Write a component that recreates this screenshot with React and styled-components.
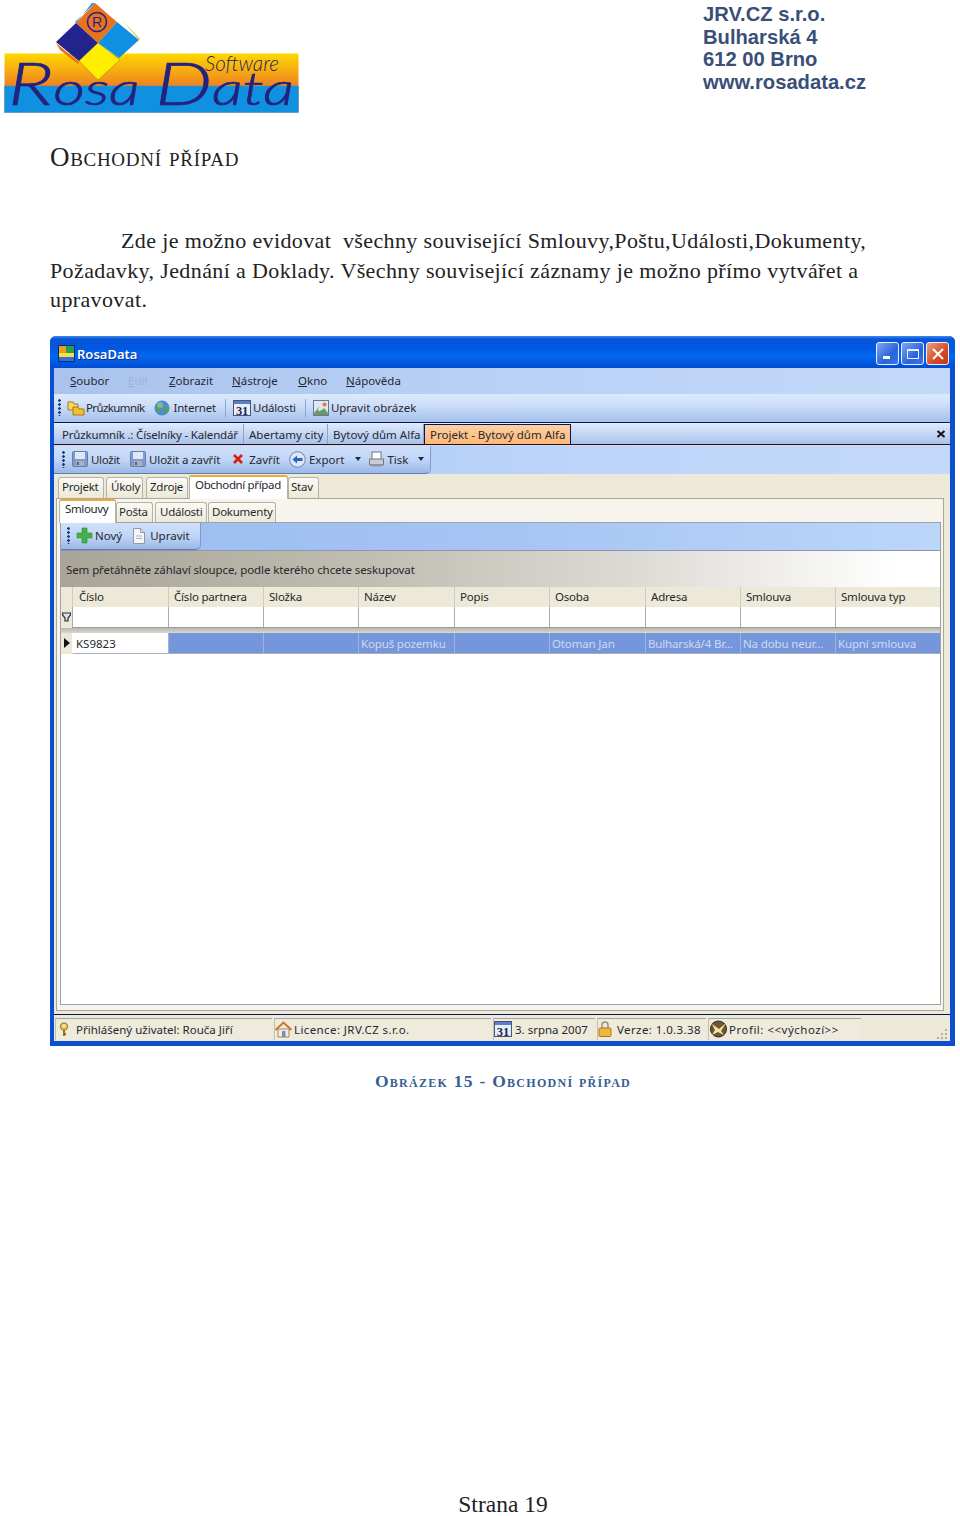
import React from 'react';
import styled, { createGlobalStyle } from 'styled-components';

const Global = createGlobalStyle`
  html, body { margin: 0; padding: 0; background: #fff; }
  #root { width: 960px; height: 1516px; overflow: hidden; }
`;

const Page = styled.div`
  width: 960px; height: 1516px; display: flex; flex-direction: column;
  font-family: "Liberation Serif", serif; color: #1c1c1c; background: #fff;
`;
const Header = styled.header`
  display: flex; justify-content: space-between; padding-top: 2px; padding-left: 3px; box-sizing: border-box; height: 115px;
`;
const Company = styled.div`
  width: 257px; font: bold 20.2px/22.7px "Liberation Sans", sans-serif; color: #3a4f78; margin-top: 1px;
`;
const Title = styled.h1`
  margin: 25px 0 0 50px; font: normal 27px/34px "Liberation Serif", serif; font-variant: small-caps; letter-spacing: .7px; color: #222;
`;
const Para = styled.p`
  margin: 52px 0 0 50px; font-size: 22px; line-height: 29.6px; letter-spacing: .38px; white-space: pre; color: #222;
`;
const Indent = styled.span` display: inline-block; width: 71px; `;
const Window = styled.div`
  margin: 21px 0 0 50px; width: 905px; height: 710px; box-sizing: border-box; display: flex; flex-direction: column; flex: none;
  padding: 0 5px 5px 4px; border-radius: 6px 6px 0 0; background: #0b4fd0;
  font-family: "Noto Sans", sans-serif; font-size: 11.5px; color: #26282e;
`;
const TitleBar = styled.div`
  height: 32px; flex: none; box-sizing: border-box; margin: 0 -5px 0 -4px; padding: 4px 6px 0 8px; display: flex; align-items: center; border-radius: 6px 6px 0 0;
  background: linear-gradient(#3b8cec 0, #0a55d8 3px, #0057e4 12px, #0068f0 20px, #004bd0 100%);
  color: #fff; font-size: 13px; font-weight: 600;
`;
const TitleText = styled.span` margin-left: 2px; text-shadow: 1px 1px 0 #0a2c8c; flex: 1; `;
const WinButtons = styled.div` display: flex; gap: 2px; `;
const WinBtn = styled.div`
  width: 23px; height: 23px; box-sizing: border-box; border: 1px solid #e8f0ff; border-radius: 3px;
  background: ${p => p.$close ? 'linear-gradient(135deg,#e9a088,#d84a20 60%,#c23a14)' : 'linear-gradient(135deg,#7ea8f0,#2a64dc 60%,#3a74e4)'};
  display: flex; align-items: center; justify-content: center;
`;
const Menu = styled.nav`
  height: 26px; display: flex; align-items: center; padding-left: 16px; flex: none;
  background: linear-gradient(90deg,#a9c3ee,#b9d1f6 50%,#c3d9f9);
`;
const MenuItem = styled.span`
  width: ${p => p.$w}px; color: ${p => p.$off ? '#9fb4d6' : '#26282e'};
  & u { text-underline-offset: 1px; }
`;
const Bar = styled.div`
  height: 28px; flex: none; display: flex; align-items: center; padding-left: 4px; box-sizing: border-box;
  background: linear-gradient(#dbe9fc, #cfe0f9 35%, #a5c0ec);
`;
const Dark = styled.div` height: 2px; flex: none; background: linear-gradient(#04195a 50%, #e8eef8 50%); `;
const Grip = styled.div`
  width: 3px; height: 17px; flex: none; background: radial-gradient(circle at 1.5px 1.5px, #1c3a80 1.2px, transparent 1.5px) 0 0 / 3px 4px;
`;
const Tool = styled.div`
  display: flex; align-items: center; gap: ${p => p.$gap ?? 2}px; margin-left: ${p => p.$ml ?? 0}px; white-space: nowrap; flex: none;
  letter-spacing: ${p => p.$ls ?? 0}px;
`;
const Sep = styled.div` width: 1px; height: 18px; background: #8ea8d4; margin-left: ${p => p.$ml}px; flex: none; `;
const DocTabs = styled.div`
  height: 21px; flex: none; display: flex; align-items: stretch; padding-left: 3px; box-sizing: border-box;
  background: linear-gradient(#dde9fb, #a9c2ec); border-bottom: 1px solid #06155a;
`;
const DocTab = styled.div`
  width: ${p => p.$w}px; flex: none; box-sizing: border-box; padding: 1px 0 0 5px; display: flex; align-items: center; white-space: nowrap;
  letter-spacing: ${p => p.$ls ?? 0}px;
  ${p => p.$active ? 'background: linear-gradient(#fdd0a0,#fdb878); border: 1px solid #06155a; border-bottom: 0; height: 20px;' : 'border-right: 1px solid #8ca4cc;'}
`;
const DocSpacer = styled.div` flex: 1; display: flex; align-items: center; justify-content: flex-end; padding-right: 4px; `;
const OrangeLine = styled.div` height: 1px; flex: none; background: #f9d2a6; `;
const ToolRow = styled.div`
  height: 28px; flex: none; display: flex; background: linear-gradient(90deg,#a9c4f2,#bdd5f9 60%,#c2d9f9);
`;
const Pill = styled.div`
  width: ${p => p.$w}px; flex: none; display: flex; align-items: center; padding-left: ${p => p.$pl ?? 4}px; box-sizing: border-box; border-radius: 0 0 5px 0;
  background: linear-gradient(#cfe0f9, #c0d5f6 50%, #9ab7e6); border-bottom: 1px solid #5f7eb4; border-right: 1px solid #7f9ccc;
`;
const Caret = styled.span`
  width: 0; height: 0; border: 3px solid transparent; border-top: 4px solid #1a2a50; border-bottom: 0; margin-left: ${p => p.$ml}px; flex: none;
`;
const Workspace = styled.div`
  flex: 1; min-height: 0; display: flex; flex-direction: column; background: #ece9d8;
`;
const TabStrip = styled.div`
  height: ${p => p.$h}px; flex: none; display: flex; align-items: flex-end; margin-left: ${p => p.$ml ?? 0}px; padding-left: ${p => p.$pl}px; box-sizing: border-box;
`;
const Tab = styled.div`
  width: ${p => p.$w}px; height: ${p => p.$h}px; margin-right: ${p => p.$mr ?? 0}px; box-sizing: border-box; flex: none; padding: 1px 0 0 ${p => p.$pl ?? 3}px; white-space: nowrap; line-height: 15px;
  letter-spacing: ${p => p.$active ? -0.35 : -0.25}px;
  border: 1px solid #b4b2a4; border-bottom: 0; border-radius: 3px 3px 0 0;
  background: ${p => p.$active ? '#fff' : 'linear-gradient(#fbfaf4,#ece9d8)'};
  ${p => p.$active && 'border-top: 2px solid #f0a838; padding-top: 0; position: relative; z-index: 1; margin-bottom: -1px;'}
`;
const OuterPanel = styled.div`
  flex: 1; min-height: 0; margin: 0 6px 3px 2px; border: 1px solid #a8a89c; padding: 0 2px 3px 3px; display: flex; flex-direction: column; background: #f6f4ec;
  box-sizing: border-box;
`;
const InnerPanel = styled.div`
  flex: 1; min-height: 0; border: 1px solid #9ca4a8; display: flex; flex-direction: column; background: #fff; margin: 0 0 2px 0;
`;
const Strip = styled.div`
  height: 27px; flex: none; display: flex; background: linear-gradient(90deg,#9cbcf0,#a6c4f4 50%,#bcd6fa);
  border-bottom: 1px solid #8c98a8;
`;
const GroupBox = styled.div`
  height: 36px; flex: none; display: flex; align-items: center; padding: 2px 0 0 5px; box-sizing: border-box; letter-spacing: -.1px;
  background: linear-gradient(90deg,#a8a498,#c0bdb2 35%,#dcdad4 65%,#fff 95%);
`;
const Row = styled.div`
  display: grid; grid-template-columns: 11px 96px 95px 95px 96px 95px 96px 95px 95px 105px; height: ${p => p.$h}px; flex: none; width: 879px;
  background: ${p => p.$bg};
`;
const Head = styled.div`
  padding-left: ${p => p.$pl ?? 5}px; display: flex; align-items: center; border-left: ${p => p.$first ? 0 : '1px solid #cfccbc'}; white-space: nowrap; letter-spacing: -.2px;
`;
const FCell = styled.div`
  border-left: 1px solid #a8aaa4; border-bottom: 1px solid #9a9c98; background: #fff;
`;
const RowHead = styled.div`
  display: flex; align-items: center; justify-content: center; background: #ece9d8;
`;
const Cell = styled.div`
  padding: 1px 0 0 ${p => p.$white ? 3 : 2}px; display: flex; align-items: center; white-space: nowrap; overflow: hidden; letter-spacing: ${p => p.$white ? 0 : -0.15}px;
  border-left: 1px solid ${p => p.$plain ? 'transparent' : '#a0b2dc'};
  border-bottom: 1px solid #a8aeb8;
  background: ${p => p.$white ? '#fff' : 'transparent'};
  color: ${p => p.$white ? '#26282e' : '#cdd9f4'};
`;
const RowGap = styled.div` height: 5px; flex: none; width: 879px; background: linear-gradient(#b8b8b0,#d8d8d0); `;
const Blank = styled.div` flex: 1; background: #fff; `;
const Status = styled.div`
  height: 27px; flex: none; display: flex; gap: 2px; padding: 3px 0 1px 1px; box-sizing: border-box; background: #ece9d8; border-top: 1px solid #06155a;
`;
const SPanel = styled.div`
  width: ${p => p.$w}px; flex: none; display: flex; align-items: center; box-sizing: border-box; white-space: nowrap; gap: ${p => p.$gap ?? 3}px; padding-left: ${p => p.$pl ?? 0}px;
  letter-spacing: ${p => p.$ls ?? 0}px;
  border-top: 1px solid #a8a494; border-left: 1px solid #c4c0b0; background: #eeebdd;
`;
const Grow = styled.div` flex: 1; display: flex; align-items: flex-end; justify-content: flex-end; padding-right: 2px; `;
const Caption = styled.div`
  margin-top: 24px; text-align: center; width: 1006px; font-weight: bold; font-size: 17.5px; line-height: 22px; font-variant: small-caps; letter-spacing: 1.27px; color: #365f91;
`;
const Footer = styled.div`
  margin-top: auto; width: 1006px; text-align: center; font-size: 23.5px; line-height: 24px; color: #222; height: 24px;
`;

const Logo = () => (
  <svg width="300" height="113" viewBox="0 0 300 113">
    <defs>
      <linearGradient id="lg" x1="0" y1="0" x2="0" y2="1"><stop offset="0" stopColor="#ffd800" /><stop offset="1" stopColor="#ee8122" /></linearGradient>
    </defs>
    <g transform="translate(-3 -2)">
      <rect x="4.500" y="53.500" width="294" height="33" fill="url(#lg)" />
      <rect x="4.500" y="86" width="294" height="26.500" fill="#1090e0" stroke="#5c8aa8" strokeWidth=".7" />
      <polygon points="95,3 117,22 98,43 76,23" fill="#e8731c" />
      <polygon points="76,23 92,3 95,3 75,22" fill="#1090e0" />
      <polygon points="117,22 139,40 119,58 98,43" fill="#1090e0" />
      <polygon points="122,20 140,39 139,40" fill="#d8c820" />
      <polygon points="76,23 98,43 79,61 56,42" fill="#23238e" />
      <polygon points="56,43 79,62 78,64 60,50" fill="#e8731c" />
      <polygon points="98,43 120,60 98,80 79,61" fill="#ffee00" stroke="#6a6a20" strokeWidth=".4" />
      <circle cx="97" cy="22" r="9.500" fill="none" stroke="#23238e" strokeWidth="1.600" />
      <text x="97" y="27" fontFamily="Liberation Sans" fontSize="14" textAnchor="middle" fill="#23238e">R</text>
      <text x="205" y="71" fontFamily="Lato" fontStyle="italic" fontWeight="300" fontSize="21" textLength="74" lengthAdjust="spacingAndGlyphs" fill="#23235e">Software</text>
      <text x="8" y="105" fontFamily="Lato" fontStyle="italic" fontWeight="300" fontSize="46" textLength="286" lengthAdjust="spacingAndGlyphs" fill="#23237e" stroke="#23237e" strokeWidth=".7">
        <tspan fontSize="60">R</tspan>osa <tspan fontSize="60">D</tspan>ata
      </text>
    </g>
  </svg>
);

const AppIcon = () => (
  <svg width="17" height="17" viewBox="0 0 17 17">
    <rect x="1" y="1" width="7" height="7" fill="#e8a020" /><rect x="8" y="1" width="8" height="7" fill="#28a050" />
    <rect x="1" y="8" width="15" height="4" fill="#f8e040" /><rect x="1" y="12" width="15" height="4" fill="#3070d8" />
    <rect x=".5" y=".5" width="16" height="16" fill="none" stroke="#0a2a70" />
  </svg>
);
const FolderIcon = () => (
  <svg width="18" height="16" viewBox="0 0 18 16">
    <path d="M1 2h5l1 2h4v6H1z" fill="#f8d860" stroke="#a87818" />
    <path d="M6 7h5l1 2h5v6H6z" fill="#f0c030" stroke="#a87818" />
  </svg>
);
const GlobeIcon = () => (
  <svg width="16" height="16" viewBox="0 0 16 16">
    <circle cx="8" cy="8" r="7.500" fill="#4a8ed0" />
    <path d="M3 4c3-2 5-1 6 1s-1 3-2 4-1 3-2 3-2-3-3-4 0-3 1-4zM11 8c1-1 3-1 4 0-.5 3-2 5-4 6-1-2 0-4 0-6z" fill="#5aa050" />
    <circle cx="6" cy="5" r="3" fill="#cfe6f8" opacity=".35" />
  </svg>
);
const CalIcon = () => (
  <svg width="18" height="16" viewBox="0 0 18 16">
    <rect x=".5" y=".5" width="17" height="15" fill="#e8eef8" stroke="#47557a" />
    <rect x="1" y="1" width="16" height="3" fill="#5a7fc8" />
    <text x="9" y="14.500" textAnchor="middle" fontFamily="Liberation Serif" fontWeight="bold" fontSize="12.500" fill="#1c2850">31</text>
  </svg>
);
const ImageIcon = () => (
  <svg width="16" height="16" viewBox="0 0 16 16">
    <rect x=".5" y=".5" width="15" height="15" fill="#dce8f6" stroke="#6a7898" />
    <path d="M1 13l5-6 3 3 2-2 4 5v2H1z" fill="#6a9a68" /><path d="M6 7l3 3-4 1z" fill="#f4f4f0" />
    <circle cx="11.500" cy="4.500" r="2" fill="#e87838" />
  </svg>
);
const SaveIcon = () => (
  <svg width="16" height="16" viewBox="0 0 16 16">
    <rect x=".5" y=".5" width="15" height="15" rx="1" fill="#7e9cd0" stroke="#6880aa" />
    <rect x="3" y="1" width="10" height="7" fill="#dfe8f6" /><rect x="4" y="10" width="8" height="5" fill="#a8b0bc" /><rect x="5" y="11" width="2" height="3" fill="#5a6478" />
  </svg>
);
const XIcon = () => (
  <svg width="12" height="12" viewBox="0 0 12 12"><path d="M2 2l8 8M10 2l-8 8" stroke="#d81c10" strokeWidth="2.600" /></svg>
);
const BackIcon = () => (
  <svg width="17" height="17" viewBox="0 0 17 17">
    <circle cx="8.500" cy="8.500" r="7.800" fill="#dce6f6" stroke="#6a80a8" />
    <path d="M3.500 8.500l4.500-4v2.500h5.500v3H8v2.500z" fill="#2c62c4" />
  </svg>
);
const PrintIcon = () => (
  <svg width="17" height="17" viewBox="0 0 17 17">
    <rect x="4" y="1" width="9" height="8" fill="#fff" stroke="#6e7686" />
    <path d="M1.500 8h14v6h-14z" fill="#c8ccd4" stroke="#6e7686" /><rect x="3" y="13" width="11" height="2.500" fill="#8e96a4" />
  </svg>
);
const PlusIcon = () => (
  <svg width="17" height="17" viewBox="0 0 17 17"><path d="M6 1h5v5h5v5h-5v5H6v-5H1V6h5z" fill="#44b048" stroke="#2e8a38" strokeWidth=".6" /></svg>
);
const DocIcon = () => (
  <svg width="14" height="16" viewBox="0 0 14 16">
    <path d="M1.500.5h7l4 4v11h-11z" fill="#f4f6fa" stroke="#8e98ac" /><path d="M8.500.5v4h4" fill="#d4dae6" stroke="#8e98ac" />
    <path d="M4 8h6M4 10.500h6" stroke="#a8b0c0" />
  </svg>
);
const KeyIcon = () => (
  <svg width="10" height="15" viewBox="0 0 10 15">
    <circle cx="5" cy="4.500" r="3.600" fill="#f0cc50" stroke="#8a6a18" /><circle cx="5" cy="3.500" r="1" fill="#fff" />
    <path d="M5 8v6M5 12h2" stroke="#8a6a18" strokeWidth="1.800" />
  </svg>
);
const HouseIcon = () => (
  <svg width="17" height="17" viewBox="0 0 17 17">
    <path d="M3 8v8h11V8z" fill="#f4ecd8" stroke="#a08860" /><path d="M.5 9L8.500 1.500 16.500 9" fill="none" stroke="#c87838" strokeWidth="2" />
    <rect x="7" y="10" width="3.500" height="6" fill="#6a90c8" />
  </svg>
);
const LockIcon = () => (
  <svg width="14" height="16" viewBox="0 0 14 16">
    <path d="M4 7V4a3 3 0 016 0v3" fill="none" stroke="#989080" strokeWidth="1.500" />
    <rect x="1" y="7" width="12" height="8.500" rx="1" fill="#eeb840" stroke="#a87818" />
  </svg>
);
const ProfileIcon = () => (
  <svg width="19" height="18" viewBox="0 0 19 18">
    <circle cx="9.500" cy="9" r="8" fill="#6a5a34" stroke="#30281a" />
    <path d="M3 4l7 5 7-6-5 8 3 4-6-3-6 3 3-5z" fill="#f4e4a0" />
  </svg>
);
const FilterIcon = () => (
  <svg width="9" height="10" viewBox="0 0 9 10"><path d="M.5 1h8v2L6 6v3H3V6L.5 3z" fill="#dfe3e8" stroke="#2a2a2a" strokeWidth="1.200" /></svg>
);
const Pointer = () => (
  <svg width="6" height="10" viewBox="0 0 6 10"><path d="M0 0l6 5-6 5z" fill="#111" /></svg>
);
const SmallX = () => (
  <svg width="10" height="10" viewBox="0 0 10 10"><path d="M1.500 2l7 6M8.500 2l-7 6" stroke="#101418" strokeWidth="2" /></svg>
);
const GripCorner = () => (
  <svg width="12" height="12" viewBox="0 0 12 12" fill="#b4b0a0">
    <rect x="9" y="1" width="2" height="2" /><rect x="5" y="5" width="2" height="2" /><rect x="9" y="5" width="2" height="2" />
    <rect x="1" y="9" width="2" height="2" /><rect x="5" y="9" width="2" height="2" /><rect x="9" y="9" width="2" height="2" />
  </svg>
);

const COLS = ['Číslo', 'Číslo partnera', 'Složka', 'Název', 'Popis', 'Osoba', 'Adresa', 'Smlouva', 'Smlouva typ'];
const DATA = ['KS9823', '', '', 'Kopuš pozemku', '', 'Otoman Jan', 'Bulharská/4 Br…', 'Na dobu neur…', 'Kupní smlouva'];

export default function App() {
  return (
    <Page>
      <Global />
      <Header>
        <Logo />
        <Company>JRV.CZ s.r.o.<br />Bulharská 4<br />612 00 Brno<br />www.rosadata.cz</Company>
      </Header>
      <Title>Obchodní případ</Title>
      <Para>
        <Indent />{'Zde je možno evidovat  všechny související Smlouvy,Poštu,Události,Dokumenty,'}<br />
        {'Požadavky, Jednání a Doklady. Všechny související záznamy je možno přímo vytvářet a'}<br />
        {'upravovat.'}
      </Para>
      <Window>
        <TitleBar>
          <AppIcon />
          <TitleText>RosaData</TitleText>
          <WinButtons>
            <WinBtn><svg width="14" height="14" viewBox="0 0 14 14"><rect x="2" y="9" width="7" height="3" fill="#fff" /></svg></WinBtn>
            <WinBtn><svg width="14" height="14" viewBox="0 0 14 14"><rect x="1.500" y="2.500" width="11" height="9" fill="none" stroke="#e8f0ff" /><rect x="1" y="2" width="12" height="2" fill="#e8f0ff" /></svg></WinBtn>
            <WinBtn $close><svg width="14" height="14" viewBox="0 0 14 14"><path d="M2 2l10 10M12 2L2 12" stroke="#fff" strokeWidth="2" /></svg></WinBtn>
          </WinButtons>
        </TitleBar>
        <Menu>
          <MenuItem $w={58}><u>S</u>oubor</MenuItem>
          <MenuItem $w={41} $off><u>E</u>dit</MenuItem>
          <MenuItem $w={63}><u>Z</u>obrazit</MenuItem>
          <MenuItem $w={66}><u>N</u>ástroje</MenuItem>
          <MenuItem $w={48}><u>O</u>kno</MenuItem>
          <MenuItem $w={60}><u>N</u>ápověda</MenuItem>
        </Menu>
        <Bar>
          <Grip />
          <Tool $ml={6} $gap={1} $ls={-0.6}><FolderIcon />Průzkumník</Tool>
          <Tool $ml={10} $gap={3} $ls={-0.2}><GlobeIcon />Internet</Tool>
          <Sep $ml={9} />
          <Tool $ml={7} $gap={2} $ls={-0.2}><CalIcon />Události</Tool>
          <Sep $ml={9} />
          <Tool $ml={7} $gap={2}><ImageIcon />Upravit obrázek</Tool>
        </Bar>
        <Dark />
        <DocTabs>
          <DocTab $w={187} $ls={-0.18}>Průzkumník .: Číselníky - Kalendář</DocTab>
          <DocTab $w={84}>Abertamy city</DocTab>
          <DocTab $w={96}>Bytový dům Alfa</DocTab>
          <DocTab $w={147} $active>Projekt - Bytový dům Alfa</DocTab>
          <DocSpacer><SmallX /></DocSpacer>
        </DocTabs>
        <OrangeLine />
        <ToolRow>
          <Pill $w={377} $pl={8}>
            <Grip />
            <Tool $ml={7} $gap={3} $ls={-0.3}><SaveIcon />Uložit</Tool>
            <Tool $ml={10} $gap={3} $ls={-0.1}><SaveIcon />Uložit a zavřít</Tool>
            <Tool $ml={12} $gap={5}><XIcon />Zavřít</Tool>
            <Tool $ml={9} $gap={3}><BackIcon />Export</Tool>
            <Caret $ml={11} />
            <Tool $ml={7} $gap={2}><PrintIcon />Tisk</Tool>
            <Caret $ml={10} />
          </Pill>
        </ToolRow>
        <Workspace>
          <TabStrip $h={24} $pl={4}>
            <Tab $h={21} $w={46} $mr={2}>Projekt</Tab>
            <Tab $h={21} $w={37} $mr={3} $pl={4}>Úkoly</Tab>
            <Tab $h={21} $w={42} $mr={1}>Zdroje</Tab>
            <Tab $h={24} $w={99} $active $pl={5}>Obchodní případ</Tab>
            <Tab $h={21} $w={31} $pl={2}>Stav</Tab>
          </TabStrip>
          <OuterPanel>
            <TabStrip $h={23} $pl={0} $ml={-1}>
              <Tab $h={24} $w={57} $active $pl={5}>Smlouvy</Tab>
              <Tab $h={20} $w={37} $mr={2} $pl={2}>Pošta</Tab>
              <Tab $h={20} $w={52} $mr={1} $pl={4}>Události</Tab>
              <Tab $h={20} $w={68} $pl={3}>Dokumenty</Tab>
            </TabStrip>
            <InnerPanel>
              <Strip>
                <Pill $w={140} $pl={6}>
                  <Grip />
                  <Tool $ml={6} $gap={2}><PlusIcon />Nový</Tool>
                  <Tool $ml={10} $gap={4}><DocIcon />Upravit</Tool>
                </Pill>
              </Strip>
              <GroupBox>Sem přetáhněte záhlaví sloupce, podle kterého chcete seskupovat</GroupBox>
              <Row $h={20} $bg="#ece9d8">
                <Head $first />
                {COLS.map((c, i) => <Head key={c} $pl={i === 0 ? 6 : 5}>{c}</Head>)}
              </Row>
              <Row $h={21} $bg="#fff">
                <RowHead><FilterIcon /></RowHead>
                {COLS.map(c => <FCell key={c} />)}
              </Row>
              <RowGap />
              <Row $h={21} $bg="#7696dc">
                <RowHead><Pointer /></RowHead>
                {DATA.map((d, i) => <Cell key={i} $white={i === 0} $plain={i === 0}>{d}</Cell>)}
              </Row>
              <Blank />
            </InnerPanel>
          </OuterPanel>
          <Status>
            <SPanel $w={217} $gap={7} $pl={3}><KeyIcon />Přihlášený uživatel: Rouča Jiří</SPanel>
            <SPanel $w={217} $gap={2} $ls={0.4}><HouseIcon />Licence: JRV.CZ s.r.o.</SPanel>
            <SPanel $w={102} $gap={3}><CalIcon />3. srpna 2007</SPanel>
            <SPanel $w={109} $gap={5} $ls={0.4}><LockIcon />Verze: 1.0.3.38</SPanel>
            <SPanel $w={153} $gap={1} $ls={0.5}><ProfileIcon />Profil: {'<<výchozí>>'}</SPanel>
            <Grow><GripCorner /></Grow>
          </Status>
        </Workspace>
      </Window>
      <Caption>Obrázek 15 - Obchodní případ</Caption>
      <Footer>Strana 19</Footer>
    </Page>
  );
}
